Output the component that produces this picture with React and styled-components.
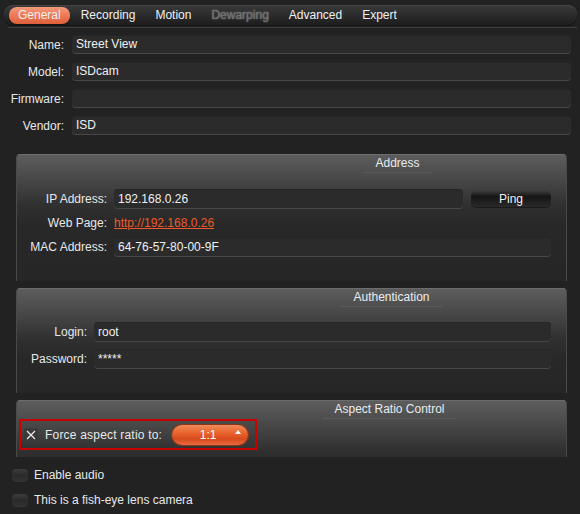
import React from "react";
import styled, { createGlobalStyle } from "styled-components";

const GlobalStyle = createGlobalStyle`
  html, body {
    margin: 0;
    padding: 0;
    background: #222222;
  }
  body {
    font-family: "Liberation Sans", Arial, sans-serif;
    font-size: 12px;
    color: #e6e8ea;
  }
`;

const tabs = [
  { name: "General", active: true },
  { name: "Recording" },
  { name: "Motion" },
  { name: "Dewarping", disabled: true },
  { name: "Advanced" },
  { name: "Expert" },
];

const info = [
  { label: "Name:", value: "Street View" },
  { label: "Model:", value: "ISDcam" },
  { label: "Firmware:", value: "" },
  { label: "Vendor:", value: "ISD" },
];

export default function App() {
  return (
    <>
      <GlobalStyle />
      <Page>
        <TabBar>
          {tabs.map((t) => (
            <Tab key={t.name} $active={t.active} $disabled={t.disabled}>
              {t.name}
            </Tab>
          ))}
        </TabBar>
        <Divider />

        <InfoList>
          {info.map((r) => (
            <Row key={r.label} $gap={8} $height={19}>
              <Label $width={64}>{r.label}</Label>
              <Field $height={19}>{r.value}</Field>
            </Row>
          ))}
        </InfoList>

        <Groups>
          <Group $bottom={24}>
            <GroupTitle $shift={212}>
              <span>Address</span>
            </GroupTitle>
            <GroupBody $gap={4} $top={16}>
              <Row>
                <Label $width={90}>IP Address:</Label>
                <Field>192.168.0.26</Field>
                <PingButton>Ping</PingButton>
              </Row>
              <Row>
                <Label $width={90}>Web Page:</Label>
                <Link href="#">http://192.168.0.26</Link>
              </Row>
              <Row>
                <Label $width={90}>MAC Address:</Label>
                <Field>64-76-57-80-00-9F</Field>
              </Row>
            </GroupBody>
          </Group>

          <Group $bottom={24}>
            <GroupTitle $shift={200}>
              <span>Authentication</span>
            </GroupTitle>
            <GroupBody $gap={7} $top={15}>
              <Row>
                <Label $width={70}>Login:</Label>
                <Field>root</Field>
              </Row>
              <Row>
                <Label $width={70}>Password:</Label>
                <Field>*****</Field>
              </Row>
            </GroupBody>
          </Group>

          <Group $bottom={7}>
            <GroupTitle $shift={196}>
              <span>Aspect Ratio Control</span>
            </GroupTitle>
            <Highlight>
              <CheckBox>
                <svg width="10" height="10" viewBox="0 0 10 10">
                  <path
                    d="M1 1 L9 9 M9 1 L1 9"
                    stroke="#e8e8e8"
                    strokeWidth="1.3"
                    fill="none"
                  />
                </svg>
              </CheckBox>
              <span>Force aspect ratio to:</span>
              <Dropdown>
                <span>1:1</span>
                <Caret />
              </Dropdown>
            </Highlight>
          </Group>
        </Groups>

        <Options>
          <Option>
            <Toggle />
            <span>Enable audio</span>
          </Option>
          <Option>
            <Toggle />
            <span>This is a fish-eye lens camera</span>
          </Option>
        </Options>
      </Page>
    </>
  );
}

const Page = styled.div`
  width: 580px;
  height: 514px;
  overflow: hidden;
  padding-top: 5px;
  box-sizing: border-box;
`;

const TabBar = styled.div`
  display: flex;
  align-items: center;
  gap: 2px;
  height: 21px;
  margin: 0 3px 0 4px;
  padding: 0 5px;
  border-radius: 9px;
  background: linear-gradient(180deg, #3a3a3a 0%, #2c2c2c 45%, #1c1c1c 100%);
  box-shadow: inset 0 1px 0 #444, inset 0 -1px 0 #151515;
`;

const Tab = styled.div`
  height: 17px;
  line-height: 17px;
  padding: 0 9px;
  border-radius: 8px;
  color: ${(p) => (p.$disabled ? "#6e6e6e" : "#eef0f2")};
  text-shadow: ${(p) => (p.$disabled ? "0 0 1.5px #9a9a9a" : "none")};
  background: ${(p) =>
    p.$active
      ? "linear-gradient(180deg, #f49a7a 0%, #ec7a56 50%, #de5f3a 100%)"
      : "transparent"};
  box-shadow: ${(p) => (p.$active ? "0 1px 1px #111" : "none")};
`;

const Divider = styled.div`
  height: 1px;
  margin: 1px 3px 0 8px;
  background: #3e3e3e;
`;

const InfoList = styled.div`
  display: flex;
  flex-direction: column;
  gap: 8px;
  margin: 7px 9px 0 0;
`;

const Row = styled.div`
  display: flex;
  align-items: center;
  gap: ${(p) => p.$gap ?? 7}px;
  height: ${(p) => p.$height ?? 20}px;
`;

const Label = styled.div`
  width: ${(p) => p.$width}px;
  flex-shrink: 0;
  text-align: right;
  white-space: nowrap;
`;

const Field = styled.div`
  flex: 1;
  height: ${(p) => p.$height ?? 20}px;
  line-height: ${(p) => p.$height ?? 20}px;
  padding-left: 4px;
  border-radius: 4px;
  background: #2b2b2b;
  box-shadow: inset 0 1px 0 #262626, inset 0 -1px 0 #474747;
  color: #eef0f2;
`;

const Groups = styled.div`
  display: flex;
  flex-direction: column;
  gap: 7px;
  margin: 19px 13px 0 16px;
`;

const Group = styled.div`
  border: 1px solid #4a4a4a;
  border-top-color: #6c6c6c;
  border-bottom: none;
  border-radius: 4px 4px 0 0;
  padding-bottom: ${(p) => p.$bottom}px;
  background: linear-gradient(
    180deg,
    #5d5d5d 0px,
    #474747 25px,
    #303030 50px,
    #282828 70px,
    #262626 100%
  );
`;

const GroupTitle = styled.div`
  display: flex;
  justify-content: center;
  padding-left: ${(p) => p.$shift}px;
  height: 18px;
  span {
    line-height: 17px;
    padding: 0 12px;
    border-bottom: 1px solid #5a5a5a;
    color: #e8ecf0;
  }
`;

const GroupBody = styled.div`
  display: flex;
  flex-direction: column;
  gap: ${(p) => p.$gap}px;
  margin-top: ${(p) => p.$top}px;
  padding-right: 15px;
`;

const PingButton = styled.div`
  width: 80px;
  height: 16px;
  line-height: 16px;
  margin-left: 1px;
  text-align: center;
  border-radius: 5px;
  background: linear-gradient(180deg, #3a3a3a 0%, #151515 35%, #2a2a2a 100%);
  box-shadow: 0 1px 0 #1a1a1a;
  color: #eef0f2;
`;

const Link = styled.a`
  color: #ee5a2c;
  text-decoration: underline;
`;

const Highlight = styled.div`
  display: flex;
  align-items: center;
  width: 238px;
  height: 31px;
  margin-left: 2px;
  padding-left: 3px;
  border: 2px solid #c80000;
  box-sizing: border-box;
  span {
    margin-left: 7px;
    letter-spacing: 0.2px;
  }
`;

const CheckBox = styled.div`
  width: 14px;
  height: 14px;
  display: flex;
  align-items: center;
  justify-content: center;
  border-radius: 2px;
  background: #3a3a3a;
`;

const Dropdown = styled.div`
  position: relative;
  width: 76px;
  height: 20px;
  margin-left: 10px;
  display: flex;
  align-items: center;
  justify-content: center;
  border-radius: 10px;
  background: linear-gradient(
    180deg,
    #f08a5a 0%,
    #e8642e 40%,
    #d84a1c 70%,
    #e86a40 100%
  );
  box-shadow: 0 0 0 1px #8a3818;
  span {
    margin: 0 4px 0 0;
    letter-spacing: 0;
    color: #ffffff;
  }
`;

const Caret = styled.div`
  position: absolute;
  right: 7px;
  top: 5px;
  width: 0;
  height: 0;
  border-left: 3px solid transparent;
  border-right: 3px solid transparent;
  border-bottom: 4px solid #ffffff;
`;

const Options = styled.div`
  display: flex;
  flex-direction: column;
  gap: 11px;
  margin: 11px 0 0 12px;
`;

const Option = styled.div`
  display: flex;
  align-items: center;
  gap: 6px;
  height: 14px;
`;

const Toggle = styled.div`
  width: 16px;
  height: 13px;
  border-radius: 4px;
  background: linear-gradient(180deg, #3c3c3c 0%, #2a2a2a 50%, #333 100%);
`;
